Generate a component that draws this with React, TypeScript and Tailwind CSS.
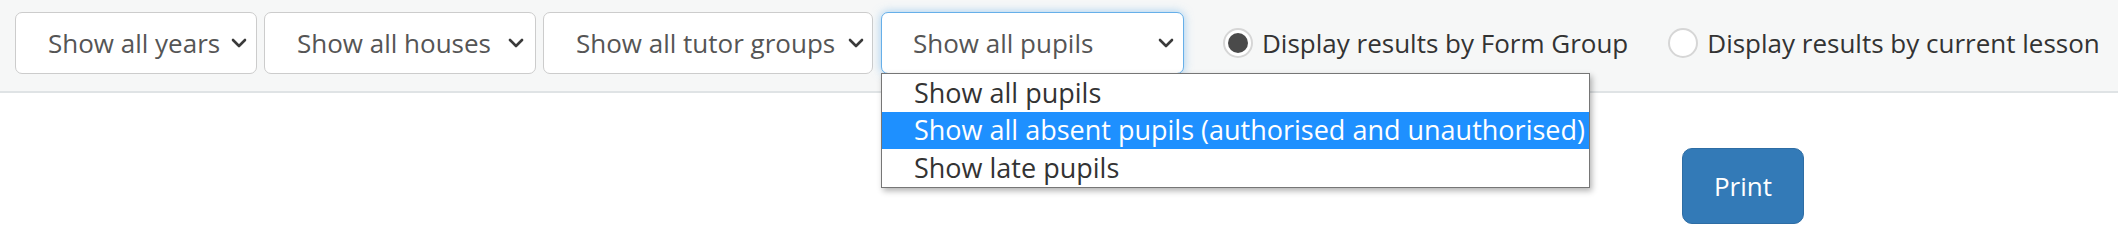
const FONT = "font-['Open_Sans','Liberation_Sans',sans-serif]";

function Chevron() {
  return (
    <svg width="16" height="10" viewBox="0 0 16 10" className="shrink-0">
      <polyline
        points="2,2 8,8 14,2"
        fill="none"
        stroke="#3a3a3a"
        strokeWidth="2.6"
        strokeLinecap="round"
        strokeLinejoin="round"
      />
    </svg>
  );
}

interface SelectBoxProps {
  label: string;
  className: string;
}

function SelectBox({ label, className }: SelectBoxProps) {
  return (
    <div
      className={`h-[62px] flex items-center justify-between bg-white border border-[#cccccc] rounded-[7px] text-[26px] text-[#555555] ${className}`}
    >
      <span className="whitespace-nowrap">{label}</span>
      <Chevron />
    </div>
  );
}

function Radio({ checked, label }: { checked: boolean; label: string }) {
  return (
    <label className="flex items-center gap-[9px] text-[26px] text-[#333333] whitespace-nowrap">
      <span className="w-[30px] h-[30px] rounded-full border-2 border-[#d6d6d6] bg-white flex items-center justify-center">
        {checked && <span className="w-[20px] h-[20px] rounded-full bg-[#4a4a4a]" />}
      </span>
      {label}
    </label>
  );
}

const OPTIONS = [
  "Show all pupils",
  "Show all absent pupils (authorised and unauthorised)",
  "Show late pupils",
];

export default function App() {
  return (
    <div className={`w-[2118px] h-[240px] overflow-hidden bg-white ${FONT}`}>
      {/* Filter bar */}
      <div className="h-[93px] bg-[#f6f7f7] border-b-2 border-[#dfe3e5] flex items-start pt-[12px] pl-[15px]">
        <div className="flex gap-[7px]">
          <SelectBox label="Show all years" className="w-[242px] pl-[32px] pr-[9px]" />
          <SelectBox label="Show all houses" className="w-[272px] pl-[32px] pr-[11px]" />
          <SelectBox label="Show all tutor groups" className="w-[330px] pl-[32px] pr-[8px]" />

          {/* Open select */}
          <div className="relative ml-[1px]">
            <div className="w-[303px] h-[62px] flex items-center justify-between bg-white border border-[#66afe9] rounded-[7px] pl-[31px] pr-[9px] text-[26px] text-[#555555] shadow-[0_0_10px_rgba(102,175,233,0.6)]">
              <span className="whitespace-nowrap">Show all pupils</span>
              <Chevron />
            </div>
            <div className="absolute top-[61px] left-0 w-[709px] bg-white border border-[#767676] shadow-[2px_3px_6px_rgba(0,0,0,0.3)] z-10">
              {OPTIONS.map((opt, i) => (
                <div
                  key={opt}
                  className={`h-[37.5px] flex items-center pl-[32px] text-[27px] whitespace-nowrap ${
                    i === 1 ? "bg-[#1e90ff] text-white" : "text-[#333333]"
                  }`}
                >
                  {opt}
                </div>
              ))}
            </div>
          </div>
        </div>

        <div className="flex items-center h-[62px] ml-[39px] gap-[40px]">
          <Radio checked label="Display results by Form Group" />
          <Radio checked={false} label="Display results by current lesson" />
        </div>
      </div>

      {/* Content */}
      <div className="flex justify-end pr-[314px] pt-[55px]">
        <button className="w-[122px] h-[76px] rounded-[10px] bg-[#337ab7] border border-[#2e6da4] text-white text-[26px]">
          Print
        </button>
      </div>
      <p className="mt-[12px] pl-[34px] text-[26px] leading-[37px] text-[#333333] whitespace-nowrap">
        lo pupils are currently absent from form
      </p>
    </div>
  );
}
